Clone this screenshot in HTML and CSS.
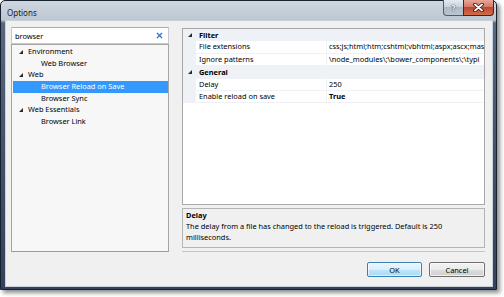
FILE: index.html
```html
<!DOCTYPE html>
<html>
<head>
<meta charset="utf-8">
<title>Options</title>
<link rel="stylesheet" href="styles.css">
</head>
<body>
<div class="window">
  <div class="titlebar">
    <span class="title">Options</span>
    <div class="caption">
      <div class="cap help">?</div>
      <div class="cap close">
        <svg width="11" height="9" viewBox="0 0 11 9"><path d="M2 1.5 L9 7.5 M9 1.5 L2 7.5" stroke="#3a1410" stroke-width="3.6" stroke-linecap="round"/><path d="M2 1.5 L9 7.5 M9 1.5 L2 7.5" stroke="#ffffff" stroke-width="1.8" stroke-linecap="round"/></svg>
      </div>
    </div>
  </div>
  <div class="frame">
    <div class="client">
      <div class="panes">
        <div class="left">
          <div class="search">
            <span class="query">browser</span>
            <svg class="clear" width="7" height="7" viewBox="0 0 7 7"><path d="M1 1 L6 6 M6 1 L1 6" stroke="#2d7bd0" stroke-width="1.4"/></svg>
          </div>
          <div class="tree">
            <div class="node"><svg class="tri" width="4" height="4" viewBox="0 0 4 4"><polygon points="4,0 4,4 0,4" fill="#2b2b2b"/></svg><span>Environment</span></div>
            <div class="node leaf">Web Browser</div>
            <div class="node"><svg class="tri" width="4" height="4" viewBox="0 0 4 4"><polygon points="4,0 4,4 0,4" fill="#2b2b2b"/></svg><span>Web</span></div>
            <div class="node leaf selected">Browser Reload on Save</div>
            <div class="node leaf">Browser Sync</div>
            <div class="node"><svg class="tri" width="4" height="4" viewBox="0 0 4 4"><polygon points="4,0 4,4 0,4" fill="#2b2b2b"/></svg><span>Web Essentials</span></div>
            <div class="node leaf">Browser Link</div>
          </div>
        </div>
        <div class="right">
          <div class="grid">
            <div class="row cat"><span class="gl"><svg width="4" height="4" viewBox="0 0 4 4"><polygon points="4,0 4,4 0,4" fill="#2b2b2b"/></svg></span><span class="catname">Filter</span></div>
            <div class="row prop"><span class="gl"></span><span class="name">File extensions</span><span class="val">css;js;html;htm;cshtml;vbhtml;aspx;ascx;mas</span></div>
            <div class="row prop"><span class="gl"></span><span class="name">Ignore patterns</span><span class="val">\node_modules\;\bower_components\;\typi</span></div>
            <div class="row cat"><span class="gl"><svg width="4" height="4" viewBox="0 0 4 4"><polygon points="4,0 4,4 0,4" fill="#2b2b2b"/></svg></span><span class="catname">General</span></div>
            <div class="row prop"><span class="gl"></span><span class="name">Delay</span><span class="val">250</span></div>
            <div class="row prop"><span class="gl"></span><span class="name">Enable reload on save</span><span class="val bold">True</span></div>
          </div>
          <div class="desc">
            <div class="desc-title">Delay</div>
            <div class="desc-text">The delay from a file has changed to the reload is triggered. Default is 250 milliseconds.</div>
          </div>
        </div>
      </div>
      <div class="buttons">
        <div class="btn default">OK</div>
        <div class="btn">Cancel</div>
      </div>
    </div>
  </div>
</div>
</body>
</html>
```

FILE: styles.css
```css
* { box-sizing: border-box; }
html, body { margin: 0; padding: 0; background: #ffffff; }
body {
  width: 504px;
  height: 297px;
  overflow: hidden;
  font-family: "Noto Sans", "Open Sans", sans-serif;
  font-size: 7.4px;
  color: #000;
}
.window {
  width: 497px;
  height: 290px;
  border: 1px solid #17212f;
  border-radius: 5px 5px 0 0;
  background: linear-gradient(#cfd7e0 0, #bdc7d2 19px, #56677f 22px, #3e4f68 60%, #33435b 100%);
  box-shadow: 3px 3px 4px rgba(0, 0, 0, 0.45);
  display: flex;
  flex-direction: column;
}
.titlebar {
  height: 20px;
  display: flex;
  align-items: flex-start;
  padding-left: 6px;
}
.title {
  margin-top: 7px;
  line-height: 10px;
  font-size: 8px;
  color: #1b1b1b;
}
.caption {
  margin-left: auto;
  margin-right: 2px;
  margin-top: -1px;
  display: flex;
}
.cap {
  height: 16px;
  border: 1px solid #4f5a6a;
  border-top: none;
  display: flex;
  align-items: center;
  justify-content: center;
}
.help {
  width: 20px;
  border-right: none;
  border-radius: 0 0 0 4px;
  background: linear-gradient(#e3e9ef, #c9d2dc 45%, #aeb9c6 50%, #bcc6d1);
  color: #ffffff;
  font-weight: bold;
  font-size: 9px;
  text-shadow: 0 0 1px #333, 0 0 1px #333;
}
.close {
  width: 31px;
  border-color: #4d201a;
  border-radius: 0 0 4px 0;
  background: linear-gradient(#e8a797, #d37a6a 45%, #c0472f 50%, #d26c4c);
}
.frame {
  flex: 1;
  display: flex;
  padding: 0 4px 3px 5px;
}
.client {
  flex: 1;
  background: #f0f0f0;
  box-shadow: 0 0 0 1px #c9d1da;
  padding: 6px 7px 9px 5px;
  display: flex;
  flex-direction: column;
}
.panes {
  height: 225px;
  display: flex;
  gap: 13px;
}
.left {
  width: 158px;
  display: flex;
  flex-direction: column;
}
.search {
  height: 17px;
  background: #ffffff;
  border: 1px solid #c6c9d0;
  border-top-color: #abadb3;
  display: flex;
  align-items: center;
  padding: 0 3px 0 3px;
}
.query { flex: 1; color: #000; }
.clear { margin-right: 2px; }
.tree {
  flex: 1;
  background: #f7f7f7;
  border: 1px solid #a5a5a5;
  border-bottom-color: #9a9a9a;
  padding-top: 1px;
}
.node {
  height: 11.7px;
  line-height: 11.7px;
  padding-left: 7px;
  display: flex;
  align-items: center;
  white-space: nowrap;
}
.node .tri { margin-right: 5px; }
.node.leaf { padding-left: 29px; }
.node.selected {
  margin-left: 1px;
  padding-left: 28px;
  background: #3399ff;
  color: #ffffff;
}
.right {
  flex: 1;
  display: flex;
  flex-direction: column;
  padding-top: 1px;
  border-bottom: 1px solid #c4c4c4;
}
.grid {
  flex: 1;
  background: #ffffff;
  border: 1px solid #a8a8a8;
  overflow: hidden;
}
.row {
  height: 12.4px;
  display: grid;
  grid-template-columns: 13px 131px 1fr;
  align-items: stretch;
  white-space: nowrap;
}
.gl {
  background: #eef1f6;
  display: flex;
  align-items: center;
  justify-content: center;
  padding-left: 1px;
}
.cat {
  background: #eef1f6;
  border-bottom: 1px solid #eef1f6;
}
.catname {
  grid-column: 2 / 4;
  font-weight: bold;
  padding-left: 3px;
  line-height: 12px;
}
.name, .val {
  line-height: 11.4px;
  border-bottom: 1px solid #eef1f6;
  overflow: hidden;
}
.name {
  padding-left: 3px;
  border-right: 1px solid #eef1f6;
}
.val { padding-left: 2px; }
.bold { font-weight: bold; }
.desc {
  height: 40px;
  margin-top: 3px;
  margin-bottom: 3px;
  border: 1px solid #b4b4b4;
  background: #f0f0f0;
  padding: 1px 3px;
  line-height: 11px;
}
.desc-title { font-weight: bold; }
.buttons {
  margin-top: 10px;
  display: flex;
  justify-content: flex-end;
  gap: 7px;
}
.btn {
  height: 15px;
  width: 56px;
  border: 1px solid #707070;
  border-radius: 2px;
  background: linear-gradient(#f2f2f2, #ebebeb 50%, #dddddd 51%, #cfcfcf);
  box-shadow: inset 0 0 0 1px rgba(255, 255, 255, 0.7);
  display: flex;
  align-items: center;
  justify-content: center;
  color: #000;
}
.btn.default {
  width: 55px;
  border-color: #3c7fb1;
  background: linear-gradient(#eaf6fd, #d9f0fc 50%, #bee6fd 51%, #a7d9f5);
  box-shadow: inset 0 0 0 1px rgba(255, 255, 255, 0.6);
}
```
